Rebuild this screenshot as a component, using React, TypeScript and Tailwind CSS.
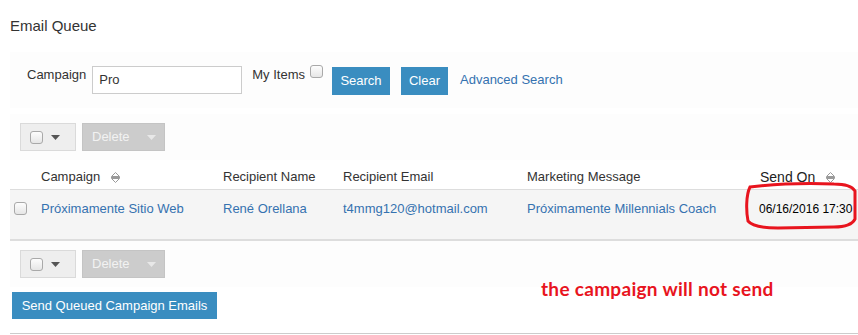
import React from "react";

const font = { fontFamily: '"Liberation Sans", Arial, sans-serif' };

function Check() {
  return (
    <span className="inline-block h-[13px] w-[13px] rounded-[3px] border border-[#a9a9a9] bg-gradient-to-b from-[#fdfdfd] to-[#e6e6e6]" />
  );
}

function Caret({ color = "#555" }: { color?: string }) {
  return (
    <svg width="9" height="5" viewBox="0 0 9 5">
      <path d="M0 0h9L4.5 5z" fill={color} />
    </svg>
  );
}

function SortIcon() {
  return (
    <svg width="11" height="13" viewBox="0 0 11 13" className="ml-[10px] inline-block">
      <path d="M1.5 5.5L5.5 1.5L9.5 5.5Z" fill="none" stroke="#9a9a9a" strokeWidth="1" />
      <path d="M1.5 7.5L5.5 11.5L9.5 7.5Z" fill="none" stroke="#9a9a9a" strokeWidth="1" />
      <path d="M1 6.5h9" stroke="#9a9a9a" strokeWidth="1" />
    </svg>
  );
}

function Toolbar() {
  return (
    <div className="flex items-center gap-[6px] bg-[#fdfdfd] pl-[10px] py-[9px]">
      <div className="flex h-[28px] w-[56px] items-center gap-[8px] border border-[#dadada] bg-[#eeeeee] pl-[9px]">
        <Check />
        <Caret />
      </div>
      <div className="flex h-[28px] w-[83px] items-center justify-between border border-[#c4c4c4] bg-[#cccccc] pl-[9px] pr-[8px] text-[13px] text-[#f2f2f2]">
        <span>Delete</span>
        <Caret color="#e8e8e8" />
      </div>
    </div>
  );
}

const cols = "grid grid-cols-[31px_182px_120px_184px_233px_1fr]";

export default function App() {
  return (
    <div className="relative h-[335px] w-[858px] overflow-hidden bg-white text-[13px] text-[#333]" style={font}>
      <div className="pl-[10px]">
        <h1 className="pt-[16px] text-[15px] leading-[20px] text-[#333]">Email Queue</h1>

        <div className="mt-[16px] flex h-[56px] items-center bg-[#fdfdfd] pl-[17px]">
          <span className="-mt-[10px] mr-[6px]">Campaign</span>
          <div className="flex h-[28px] w-[150px] items-center border border-[#cccccc] bg-white px-[6px]">Pro</div>
          <span className="-mt-[10px] ml-[10px] mr-[5px]">My Items</span>
          <span className="-mt-[12px]">
            <Check />
          </span>
          <button className="ml-[9px] mt-[1px] h-[28px] w-[58px] bg-[#3a8dc0] text-[13px] text-white">Search</button>
          <button className="ml-[11px] mt-[1px] h-[28px] w-[47px] bg-[#3a8dc0] text-[13px] text-white">Clear</button>
          <span className="ml-[12px] text-[#3572b0]">Advanced Search</span>
        </div>

        <div className="mt-[6px]">
          <Toolbar />
        </div>

        <div className="relative">
          <div className={`${cols} h-[30px] items-center border-b border-[#dddddd] pt-[5px]`}>
            <span />
            <span className="flex items-center text-[13px]">
              Campaign
              <SortIcon />
            </span>
            <span>Recipient Name</span>
            <span>Recipient Email</span>
            <span>Marketing Message</span>
            <span className="flex items-center text-[14px] text-[#222]">
              Send On
              <SortIcon />
            </span>
          </div>
          <div className={`${cols} h-[51px] border-b-2 border-[#dddddd] bg-[#f5f5f5] pt-[10px] text-[13px] leading-[18px]`}>
            <span className="pl-[4px] pt-[2px]">
              <Check />
            </span>
            <span className="text-[#3572b0]">Próximamente Sitio Web</span>
            <span className="text-[#3572b0]">René Orellana</span>
            <span className="text-[#3572b0]">t4mmg120@hotmail.com</span>
            <span className="text-[#3572b0]">Próximamente Millennials Coach</span>
            <span className="-ml-[1px] text-[12px] text-black">06/16/2016 17:30</span>
          </div>
          <svg className="absolute left-[734px] top-[21px]" width="114" height="50" viewBox="0 0 114 50">
            <path
              d="M6 6 C30 3 60 2 90 3 C100 3 108 5 111 10 L111 38 C108 44 100 46 90 46 L34 47 C20 47 8 45 4 40 C2 30 2 14 6 6 Z"
              fill="none"
              stroke="#e8141e"
              strokeWidth="3"
            />
          </svg>
        </div>

        <Toolbar />

        <div className="mt-[5px] pl-[2px]">
          <button className="h-[27px] w-[205px] bg-[#3a8dc0] text-[13px] text-white">Send Queued Campaign Emails</button>
        </div>

        <div className="mt-[14px] border-b border-[#cccccc]" />
      </div>

      <span
        className="absolute left-[541px] top-[275px] text-[19px] font-bold tracking-[0.3px] text-[#e8141e]"
        style={{ fontFamily: "Lato, 'Open Sans', sans-serif" }}
      >
        the campaign will not send
      </span>
    </div>
  );
}
